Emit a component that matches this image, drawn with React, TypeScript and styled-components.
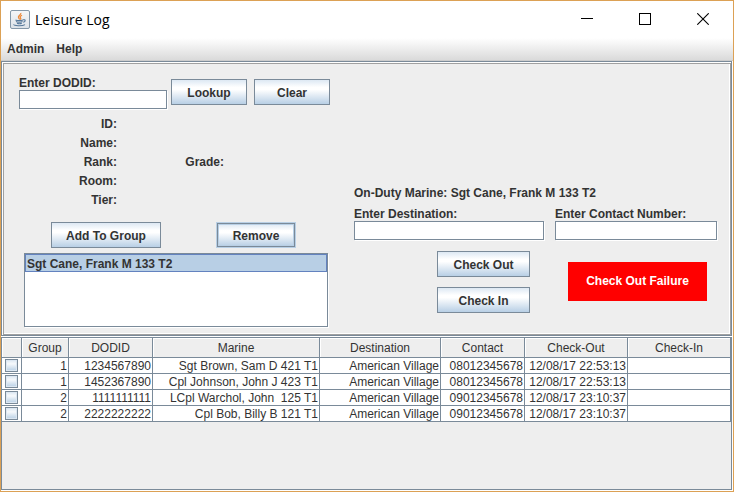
import React from "react";
import styled, { createGlobalStyle, css } from "styled-components";

const steel = "#7a8a99";
const panel = "#eeeeee";
const ink = "#333333";

const GlobalStyle = createGlobalStyle`
  * { box-sizing: border-box; }
  body {
    margin: 0;
    font: 12px/16px "Liberation Sans", Arial, sans-serif;
    color: ${ink};
    background: ${panel};
  }
`;

const Frame = styled.div`
  display: flex;
  flex-direction: column;
  min-height: 100vh;
  border: 1px solid #dca155;
  background: #ffffff;
`;

const TitleBar = styled.header`
  display: flex;
  align-items: center;
  height: 37px;
  padding: 0 1px 0 9px;
`;

const Title = styled.h1`
  flex: 1;
  margin: 0;
  padding-left: 5px;
  font: 400 14px/20px "Open Sans", "Noto Sans", sans-serif;
  color: #000000;
`;

const WindowButton = styled.button`
  display: grid;
  place-items: center;
  align-self: flex-start;
  width: 58px;
  height: 36px;
  padding: 0;
  border: 0;
  background: transparent;
`;

const MenuBar = styled.nav`
  display: flex;
  align-items: center;
  gap: 12px;
  height: 23px;
  padding-left: 6px;
  border-bottom: 1px solid #cccccc;
  background: linear-gradient(#ffffff, #dadada);
`;

const MenuButton = styled.button`
  padding: 0;
  border: 0;
  background: transparent;
  font: bold 12px/16px "Liberation Sans", Arial, sans-serif;
  color: ${ink};
`;

const Bevel = styled.section`
  margin-right: 1px;
  border: 1px solid ${steel};
  background: #ffffff;
`;

const FormPanel = styled.main`
  display: grid;
  grid-template-columns: 311px minmax(363px, 1fr);
  column-gap: 24px;
  margin: 1px 0 0 1px;
  padding: 12px 13px 7px 15px;
  border: 1px solid #a0a0a0;
  background: ${panel};
  box-shadow: inset -1px -1px #ffffff;
  font-weight: bold;
`;

const Member = styled.div`
  display: flex;
  flex-direction: column;
`;

const LookupRow = styled.form`
  display: flex;
  gap: 4px;
`;

const LookupActions = styled.div`
  display: flex;
  gap: 7px;
  padding-top: 3px;
`;

const Field = styled.div<{ $grow?: number }>`
  display: flex;
  flex-direction: column;
  flex: ${(p) => p.$grow ?? 0} 1 0;
  min-width: 0;
`;

const LookupField = styled(Field)`
  flex: 0 0 148px;
`;

const FieldLabel = styled.label`
  height: 14px;
  line-height: 14px;
  white-space: nowrap;
`;

const sunken = css`
  border: 1px solid ${steel};
  box-shadow: 1px 1px #ffffff;
  background: #ffffff;
`;

const TextInput = styled.input`
  ${sunken}
  width: 100%;
  height: 19px;
  padding: 0 2px;
  border-radius: 0;
  font: 12px "Liberation Sans", Arial, sans-serif;
  color: ${ink};
  outline: 0;
`;

const Button = styled.button<{ $width: number; $focused?: boolean }>`
  width: ${(p) => p.$width}px;
  height: 26px;
  padding: 2px 0 0;
  border: 1px solid ${steel};
  background: linear-gradient(#dde8f3 0%, #ffffff 30%, #ffffff 40%, #b8cfe5 100%);
  box-shadow: ${(p) => (p.$focused ? "0 0 0 1px #b8cfe5, inset 0 0 0 1px #b8cfe5" : "none")};
  font: bold 12px/16px "Liberation Sans", Arial, sans-serif;
  color: ${ink};
`;

const FocusedButton = styled(Button)`
  height: 24px;
`;

const Details = styled.dl`
  display: grid;
  grid-template-columns: 98px 107px;
  grid-auto-rows: 19px;
  margin: 6px 0 12px;
  line-height: 19px;
  text-align: right;
`;

const Detail = styled.div<{ $column?: number }>`
  grid-column: ${(p) => p.$column ?? 1};
`;

const Term = styled.dt`
  margin: 0;
`;

const GroupActions = styled.div`
  display: flex;
  align-items: center;
  gap: 56px;
  padding-left: 32px;
`;

const GroupList = styled.ul`
  ${sunken}
  height: 74px;
  margin: 5px 2px 0 5px;
  padding: 0;
  list-style: none;
`;

const GroupItem = styled.li`
  height: 18px;
  padding-left: 1px;
  border: 1px solid #6382bf;
  background: #b8cfe5;
  line-height: 18px;
`;

const Duty = styled.div`
  display: flex;
  flex-direction: column;
  padding-top: 109px;
`;

const DutyLine = styled.p`
  margin: 0 0 6px;
`;

const Fields = styled.div`
  display: flex;
  gap: 11px;
`;

const Actions = styled.div`
  display: flex;
  align-items: center;
  justify-content: flex-end;
  gap: 38px;
  padding: 11px 10px 0 0;
`;

const ButtonStack = styled.div`
  display: flex;
  flex-direction: column;
  gap: 10px;
`;

const Failure = styled.output`
  width: 139px;
  margin-bottom: 2px;
  background: #ff0000;
  color: #ffffff;
  line-height: 39px;
  text-align: center;
`;

const LogPane = styled.section`
  flex: 1;
  margin: 1px 1px 1px 0;
  border: 1px solid ${steel};
  background: ${panel};
`;

const LogTable = styled.table`
  width: 100%;
  table-layout: fixed;
  border-spacing: 0;
`;

const Col = styled.col<{ $width: number }>`
  width: ${(p) => p.$width}px;
`;

const cell = css`
  border-right: 1px solid ${steel};
  border-bottom: 1px solid ${steel};
  overflow: hidden;
  white-space: pre;
`;

const HeadCell = styled.th`
  ${cell}
  height: 20px;
  padding: 2px 0 0;
  box-shadow: inset 1px 1px #ffffff;
  font-weight: normal;
  line-height: 17px;
`;

const Cell = styled.td`
  ${cell}
  height: 16px;
  padding: 1px 1px 0 0;
  background: #ffffff;
  line-height: 14px;
  text-align: right;
`;

const TickCell = styled(Cell)`
  padding: 0 0 0 3px;
`;

const Tick = styled.input`
  appearance: none;
  display: block;
  width: 13px;
  height: 13px;
  margin: 0;
  border: 1px solid ${steel};
  background: linear-gradient(#dde8f3, #f6f9fc 35%, #b8cfe5);
  box-shadow: inset 0 0 0 1px #dce7f2;
`;

const records = [
  ["1", "1234567890", "Sgt Brown, Sam D 421 T1", "American Village", "08012345678", "12/08/17 22:53:13", ""],
  ["1", "1452367890", "Cpl Johnson, John J 423 T1", "American Village", "08012345678", "12/08/17 22:53:13", ""],
  ["2", "1111111111", "LCpl Warchol, John  125 T1", "American Village", "09012345678", "12/08/17 23:10:37", ""],
  ["2", "2222222222", "Cpl Bob, Billy B 121 T1", "American Village", "09012345678", "12/08/17 23:10:37", ""],
];
const columns = ["", "Group", "DODID", "Marine", "Destination", "Contact", "Check-Out", "Check-In"];
const columnWidths = [20, 47, 84, 167, 121, 84, 103, 103];

function JavaIcon() {
  return (
    <svg width="20" height="19" viewBox="0 0 20 19" aria-hidden="true">
      <defs>
        <linearGradient id="tile" x2="0" y2="1">
          <stop offset="0" stopColor="#f5f6f8" />
          <stop offset="1" stopColor="#dce2e8" />
        </linearGradient>
      </defs>
      <rect x=".5" y=".5" width="19" height="18" rx="1.5" fill="url(#tile)" stroke="#8497a8" />
      <path d="M10.8 3c.6 2-3.2 2.700-2.300 4.600.3.800 1 1.200 1.200 1.900M12 5.200c-1.500.8-2.300 1.600-1.500 2.600.5.700.3 1.300-.3 1.700" fill="none" stroke="#ec8a3c" strokeWidth="1.300" />
      <path d="M5.500 9.900c1.500.8 5.500.8 7.500 0M6 11.500c1.500.8 5 .8 6.500 0M7 13.200c1.200.5 3.500.5 4.800 0M13 9.800c2.900-.6 2.800 1.900.2 2.500M4 14.400c-1 1.500 8.300 2 11 .2" fill="none" stroke="#56789a" strokeWidth="1.100" />
    </svg>
  );
}

export default function App() {
  return (
    <>
      <GlobalStyle />
      <Frame>
        <TitleBar>
          <JavaIcon />
          <Title>Leisure Log</Title>
          <WindowButton aria-label="Minimize">
            <svg width="12" height="12" shapeRendering="crispEdges"><path d="M0 5.500h12" stroke="#000" /></svg>
          </WindowButton>
          <WindowButton aria-label="Maximize">
            <svg width="12" height="12" shapeRendering="crispEdges"><path d="M.5.5h11v11H.5z" fill="none" stroke="#000" /></svg>
          </WindowButton>
          <WindowButton aria-label="Close">
            <svg width="12" height="12"><path d="m.3.3 11.400 11.400M11.700.3.3 11.700" stroke="#000" strokeWidth="1.100" /></svg>
          </WindowButton>
        </TitleBar>
        <MenuBar>
          <MenuButton>Admin</MenuButton>
          <MenuButton>Help</MenuButton>
        </MenuBar>
        <Bevel>
          <FormPanel>
            <Member>
              <LookupRow onSubmit={(e) => e.preventDefault()}>
                <LookupField>
                  <FieldLabel htmlFor="dodid">Enter DODID:</FieldLabel>
                  <TextInput id="dodid" />
                </LookupField>
                <LookupActions>
                  <Button $width={76}>Lookup</Button>
                  <Button $width={76} type="reset">Clear</Button>
                </LookupActions>
              </LookupRow>
              <Details>
                <Detail><Term>ID:</Term></Detail>
                <Detail><Term>Name:</Term></Detail>
                <Detail><Term>Rank:</Term></Detail>
                <Detail $column={2}><Term>Grade:</Term></Detail>
                <Detail><Term>Room:</Term></Detail>
                <Detail><Term>Tier:</Term></Detail>
              </Details>
              <GroupActions>
                <Button $width={110}>Add To Group</Button>
                <FocusedButton $width={78} $focused>Remove</FocusedButton>
              </GroupActions>
              <GroupList aria-label="Group">
                <GroupItem>Sgt Cane, Frank M 133 T2</GroupItem>
              </GroupList>
            </Member>
            <Duty>
              <DutyLine>On-Duty Marine: Sgt Cane, Frank M 133 T2</DutyLine>
              <Fields>
                <Field $grow={190}>
                  <FieldLabel htmlFor="destination">Enter Destination:</FieldLabel>
                  <TextInput id="destination" />
                </Field>
                <Field $grow={162}>
                  <FieldLabel htmlFor="contact">Enter Contact Number:</FieldLabel>
                  <TextInput id="contact" />
                </Field>
              </Fields>
              <Actions>
                <ButtonStack>
                  <Button $width={93}>Check Out</Button>
                  <Button $width={93}>Check In</Button>
                </ButtonStack>
                <Failure>Check Out Failure</Failure>
              </Actions>
            </Duty>
          </FormPanel>
        </Bevel>
        <LogPane>
          <LogTable>
            <colgroup>
              {columnWidths.map((w, i) => <Col key={i} $width={w} />)}
            </colgroup>
            <thead>
              <tr>{columns.map((c) => <HeadCell key={c} scope="col">{c}</HeadCell>)}</tr>
            </thead>
            <tbody>
              {records.map((r) => (
                <tr key={r[1]}>
                  <TickCell><Tick type="checkbox" aria-label={"Select " + r[2]} /></TickCell>
                  {r.map((v, i) => <Cell key={i}>{v}</Cell>)}
                </tr>
              ))}
            </tbody>
          </LogTable>
        </LogPane>
      </Frame>
    </>
  );
}
